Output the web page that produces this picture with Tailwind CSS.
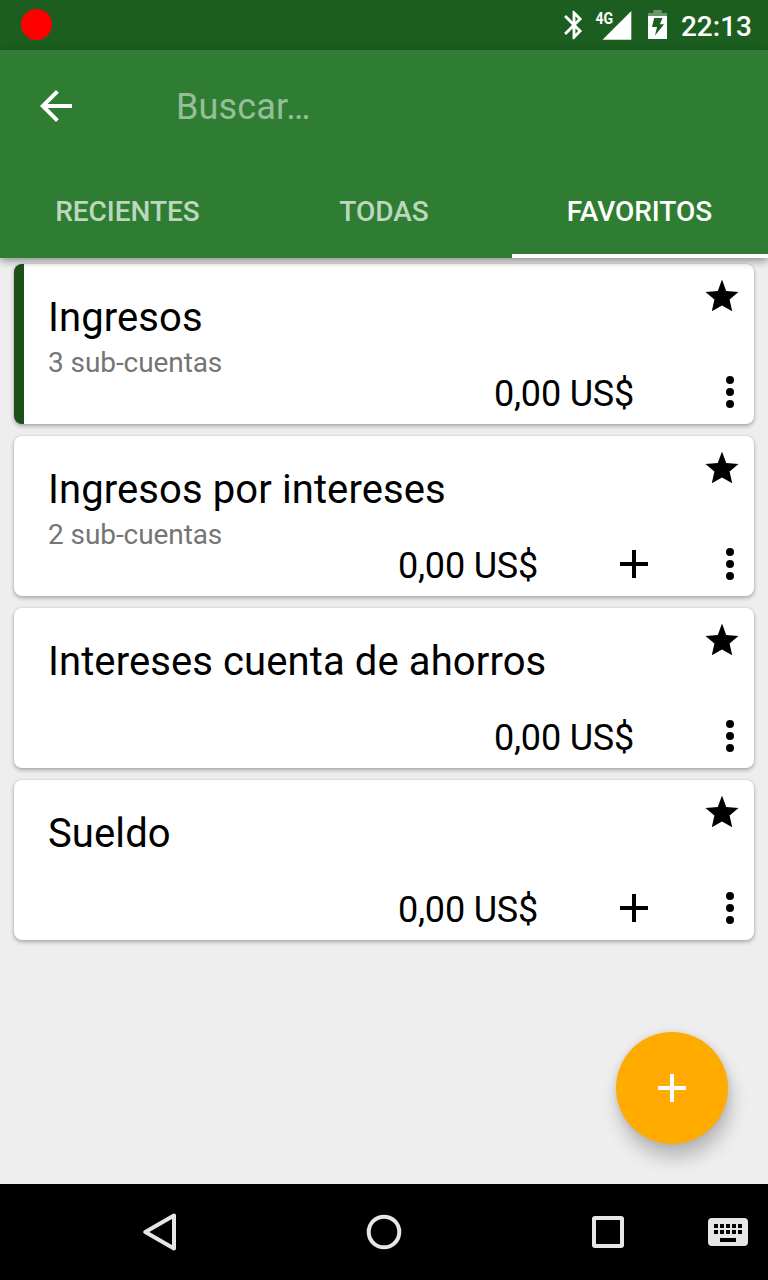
<!DOCTYPE html>
<html lang="es">
<head>
<meta charset="utf-8">
<title>Cuentas</title>
<script src="https://cdn.jsdelivr.net/npm/@tailwindcss/browser@4"></script>
</head>
<body class="bg-[#eeeeee]">
<svg class="hidden">
  <symbol id="more" viewBox="0 0 12 32"><circle cx="6" cy="4" r="4"/><circle cx="6" cy="16" r="4"/><circle cx="6" cy="28" r="4"/></symbol>
  <symbol id="plus" viewBox="0 0 28 28"><path d="M12 0h4v12h12v4H16v12h-4V16H0v-4h12z"/></symbol>
  <symbol id="fav" viewBox="0 0 34 32"><path d="M17 -.5l4.2 11.6L33.5 11.9 24.6 19.4 27.2 31.2 17 25.4 6.8 31.2 9.4 19.4.5 11.9l12.3-.8z"/></symbol>
</svg>
<div class="flex h-[1280px] w-[768px] flex-col overflow-hidden bg-[#eeeeee] font-['Roboto',sans-serif] text-black">
  <div class="flex h-[50px] shrink-0 items-center bg-[#1b5e20] pl-[21px] pr-4 text-white">
    <div class="mb-px size-[31px] rounded-full bg-[#ff0000]"></div>
    <svg class="ml-auto h-[34px] w-[34px]" viewBox="0 0 24 24" fill="currentColor"><path d="M17.71 7.71L12 2h-1v7.59L6.41 5 5 6.41 10.59 12 5 17.59 6.41 19 11 14.41V22h1l5.71-5.71-4.3-4.29 4.3-4.29zM13 5.83l1.88 1.88L13 9.59V5.83zm1.88 10.46L13 18.17v-3.76l1.88 1.88z"/></svg>
    <svg class="h-[38px] w-[41px]" viewBox="591 6 41 38" fill="currentColor"><path d="M631.3 11v28.7h-28.8z"/><text x="595.5" y="24" font-size="17" font-weight="700" textLength="17.7" lengthAdjust="spacingAndGlyphs">4G</text></svg>
    <svg class="ml-4 h-[30px] w-[19px]" viewBox="648 10 19 30" fill="currentColor"><path opacity=".35" d="M653.3 10h8.4v3h5.3v3h-19v-3h5.3z"/><path fill-rule="evenodd" d="M648 16h19v23h-19zM654.2 18h8.3l-2.6 6.2h4.2l-9.1 11.2 2-8.4h-5z"/></svg>
    <div class="ml-[14px] pt-[3px] text-[28px] leading-8 font-medium">22:13</div>
  </div>
  <header class="relative z-10 shrink-0 bg-[#2e7d32] shadow-[0_3px_8px_rgba(0,0,0,0.4)]">
    <div class="flex h-28 items-center pl-10">
      <svg class="size-8" viewBox="4 4 16 16" fill="#fff"><path d="M20 11H7.83l5.59-5.59L12 4l-8 8 8 8 1.41-1.41L7.83 13H20v-2z"/></svg>
      <div class="ml-[104px] pt-0.5 text-4xl leading-[42px] tracking-[0.15px] text-white/50">Buscar…</div>
    </div>
    <nav class="grid h-24 grid-cols-3 text-center text-[28px] leading-8 font-medium text-white/70">
      <div class="pt-[34px] pr-px tracking-[-0.03px]">RECIENTES</div>
      <div class="pt-[34px]">TODAS</div>
      <div class="border-b-4 border-white pt-[34px] pr-px tracking-[-0.03px] text-white">FAVORITOS</div>
    </nav>
  </header>
  <main class="flex grow flex-col gap-3 px-[14px] pt-[6px]">
    <section class="grid h-40 overflow-hidden rounded-lg border-l-[10px] border-[#1b5016] bg-white shadow-[0_2px_4px_rgba(0,0,0,0.3),0_0_2px_rgba(0,0,0,0.1)]">
      <div class="col-start-1 row-start-1 flex items-start justify-between pr-[15px] pl-6">
        <div class="pt-[30px]"><h2 class="text-[40px] leading-[48px] tracking-[0.1px]">Ingresos</h2><p class="mt-[5px] text-[28px] leading-8 tracking-[-0.08px] text-[#757575]">3 sub-cuentas</p></div>
        <svg class="mt-4 h-8 w-[34px]"><use href="#fav"/></svg>
      </div>
      <div class="col-start-1 row-start-1 flex h-16 items-center self-end pr-[18px]">
        <div class="ml-auto pt-1 text-4xl leading-[42px] tracking-[-0.2px]">0,00 US$</div>
        <svg class="ml-[90px] h-8 w-3"><use href="#more"/></svg>
      </div>
    </section>
    <section class="grid h-40 rounded-lg bg-white shadow-[0_2px_4px_rgba(0,0,0,0.3),0_0_2px_rgba(0,0,0,0.1)]">
      <div class="col-start-1 row-start-1 flex items-start justify-between pr-[15px] pl-[34px]">
        <div class="pt-[30px]"><h2 class="text-[40px] leading-[48px] tracking-[0.1px]">Ingresos por intereses</h2><p class="mt-[5px] text-[28px] leading-8 tracking-[-0.08px] text-[#757575]">2 sub-cuentas</p></div>
        <svg class="mt-4 h-8 w-[34px]"><use href="#fav"/></svg>
      </div>
      <div class="col-start-1 row-start-1 flex h-16 items-center self-end pr-[18px]">
        <div class="ml-auto pt-1 text-4xl leading-[42px] tracking-[-0.2px]">0,00 US$</div>
        <svg class="ml-[82px] size-7"><use href="#plus"/></svg>
        <svg class="ml-[76px] h-8 w-3"><use href="#more"/></svg>
      </div>
    </section>
    <section class="grid h-40 rounded-lg bg-white shadow-[0_2px_4px_rgba(0,0,0,0.3),0_0_2px_rgba(0,0,0,0.1)]">
      <div class="col-start-1 row-start-1 flex items-start justify-between pr-[15px] pl-[34px]">
        <h2 class="pt-[30px] text-[40px] leading-[48px] tracking-[0.1px]">Intereses cuenta de ahorros</h2>
        <svg class="mt-4 h-8 w-[34px]"><use href="#fav"/></svg>
      </div>
      <div class="col-start-1 row-start-1 flex h-16 items-center self-end pr-[18px]">
        <div class="ml-auto pt-1 text-4xl leading-[42px] tracking-[-0.2px]">0,00 US$</div>
        <svg class="ml-[90px] h-8 w-3"><use href="#more"/></svg>
      </div>
    </section>
    <section class="grid h-40 rounded-lg bg-white shadow-[0_2px_4px_rgba(0,0,0,0.3),0_0_2px_rgba(0,0,0,0.1)]">
      <div class="col-start-1 row-start-1 flex items-start justify-between pr-[15px] pl-[34px]">
        <h2 class="pt-[30px] text-[40px] leading-[48px] tracking-[0.1px]">Sueldo</h2>
        <svg class="mt-4 h-8 w-[34px]"><use href="#fav"/></svg>
      </div>
      <div class="col-start-1 row-start-1 flex h-16 items-center self-end pr-[18px]">
        <div class="ml-auto pt-1 text-4xl leading-[42px] tracking-[-0.2px]">0,00 US$</div>
        <svg class="ml-[82px] size-7"><use href="#plus"/></svg>
        <svg class="ml-[76px] h-8 w-3"><use href="#more"/></svg>
      </div>
    </section>
    <button class="mt-auto mr-[26px] mb-10 flex size-28 items-center justify-center self-end rounded-full bg-[#ffab00] shadow-[3px_14px_18px_rgba(0,0,0,0.22),0_0_8px_rgba(0,0,0,0.1)]">
      <svg class="size-7" fill="#fff"><use href="#plus"/></svg>
    </button>
  </main>
  <footer class="flex h-24 shrink-0 items-center bg-black pr-5 pl-[143px]">
    <svg class="h-[38px] w-[34px]" viewBox="0 0 34 38" fill="none" stroke="#e6e6e6" stroke-width="4" stroke-linejoin="round"><path d="M2.3 19 31 2.5v33z"/></svg>
    <svg class="ml-[189px] size-9" viewBox="0 0 36 36" fill="none" stroke="#e6e6e6" stroke-width="4"><circle cx="18" cy="18" r="15.3"/></svg>
    <div class="ml-[190px] size-8 rounded-[3px] border-4 border-[#e6e6e6]"></div>
    <svg class="ml-auto h-7 w-10" viewBox="0 0 40 28"><rect width="40" height="28" rx="4" fill="#e6e6e6"/><path d="M6 6h4v4H6zM12 6h4v4h-4zM18 6h4v4h-4zM24 6h4v4h-4zM30 6h4v4h-4zM6 12h4v4H6zM12 12h4v4h-4zM18 12h4v4h-4zM24 12h4v4h-4zM30 12h4v4h-4zM12 20h16v4H12z"/></svg>
  </footer>
</div>
</body>
</html>
